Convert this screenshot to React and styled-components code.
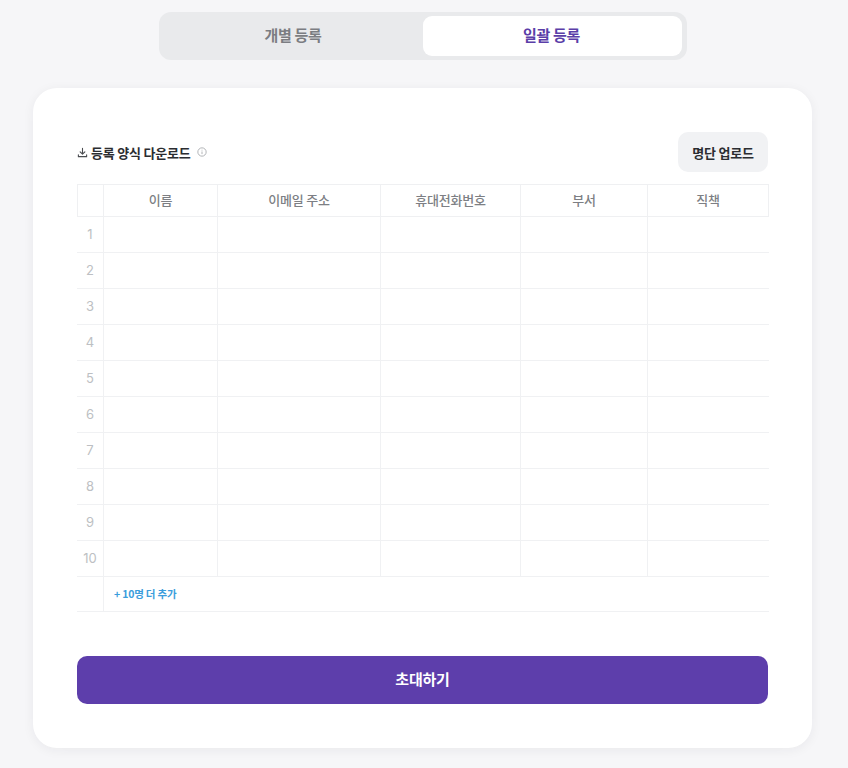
import React from 'react'
import styled, { createGlobalStyle } from 'styled-components'

const GlobalStyle = createGlobalStyle`
  html, body {
    margin: 0;
    padding: 0;
    background: #f6f6f8;
    font-family: 'Noto Sans CJK KR', 'Noto Sans', sans-serif;
  }
`

const Page = styled.div`
  box-sizing: border-box;
  width: 848px;
  height: 768px;
  padding: 12px 2px 0 0;
  display: flex;
  flex-direction: column;
  align-items: center;
  overflow: hidden;
`

const Tabs = styled.div`
  box-sizing: border-box;
  width: 528px;
  height: 48px;
  padding: 4px 5px 4px 4px;
  display: grid;
  grid-template-columns: 260px 259px;
  background: #e9eaec;
  border-radius: 12px;
`

const Tab = styled.div`
  display: flex;
  align-items: center;
  justify-content: center;
  padding-bottom: 3px;
  padding-right: ${({ active }) => (active ? '2px' : '0')};
  border-radius: 9px;
  font-size: 15px;
  font-weight: 700;
  letter-spacing: -0.3px;
  background: ${({ active }) => (active ? '#ffffff' : 'transparent')};
  color: ${({ active }) => (active ? '#5b3ea8' : '#7b7d82')};
`

const Card = styled.div`
  box-sizing: border-box;
  width: 779px;
  height: 660px;
  margin-top: 28px;
  margin-left: -1px;
  padding: 44px;
  background: #ffffff;
  border-radius: 24px;
  box-shadow: 0 2px 12px rgba(30, 35, 50, 0.06);
`

const TopRow = styled.div`
  display: flex;
  align-items: center;
  justify-content: space-between;
  width: 691px;
  height: 40px;
  margin-bottom: 12px;
`

const DownloadLink = styled.div`
  display: flex;
  align-items: center;
  font-size: 13px;
  font-weight: 700;
  letter-spacing: -0.2px;
  color: #2b2d31;
`

const DownloadIcon = styled.svg`
  width: 11px;
  height: 11px;
  margin-right: 3px;
  color: #4a4c50;
`

const InfoIcon = styled.svg`
  width: 10px;
  height: 10px;
  margin-left: 6px;
  color: #a4a6aa;
`

const UploadButton = styled.button`
  width: 90px;
  height: 40px;
  padding: 0;
  border: none;
  border-radius: 10px;
  background: #f1f2f4;
  color: #2b2d31;
  font-family: inherit;
  font-size: 13px;
  font-weight: 700;
  letter-spacing: -0.2px;
`

const Grid = styled.div`
  display: grid;
  grid-template-columns: 26px 114px 163px 140px 127px 122px;
  grid-template-rows: 33px repeat(10, 36px) 35px;
  width: 692px;
`

const HeadCell = styled.div`
  box-sizing: border-box;
  display: flex;
  align-items: center;
  justify-content: center;
  padding-bottom: 2px;
  border-top: 1px solid #eff0f2;
  border-bottom: 1px solid #eff0f2;
  border-left: 1px solid #eff0f2;
  border-right: ${({ last }) => (last ? '1px solid #eff0f2' : 'none')};
  font-size: 13px;
  font-weight: 500;
  letter-spacing: -0.2px;
  color: #7d7f84;
`

const IndexCell = styled.div`
  box-sizing: border-box;
  display: flex;
  align-items: center;
  justify-content: center;
  padding-bottom: 2px;
  border-bottom: 1px solid #f0f1f3;
  font-family: 'Inter', sans-serif;
  font-size: 13px;
  color: #bdbfc3;
`

const Cell = styled.div`
  box-sizing: border-box;
  border-bottom: 1px solid #f0f1f3;
  border-left: 1px solid #f0f1f3;
`

const AddCell = styled.div`
  box-sizing: border-box;
  grid-column: 2 / -1;
  display: flex;
  align-items: center;
  padding: 0 0 2px 10px;
  border-bottom: 1px solid #f0f1f3;
  border-left: 1px solid #f0f1f3;
  font-size: 10.5px;
  font-weight: 700;
  letter-spacing: -0.2px;
  color: #3b9ddc;
`

const InviteButton = styled.button`
  display: block;
  width: 691px;
  height: 48px;
  margin-top: 44px;
  padding: 0 0 3px;
  border: none;
  border-radius: 10px;
  background: #5d3eab;
  color: #ffffff;
  font-family: inherit;
  font-size: 15px;
  font-weight: 700;
  letter-spacing: -0.2px;
`

const COLUMNS = ['이름', '이메일 주소', '휴대전화번호', '부서', '직책']
const ROWS = [1, 2, 3, 4, 5, 6, 7, 8, 9, 10]

export default function App() {
  return (
    <Page>
      <GlobalStyle />
      <Tabs>
        <Tab>개별 등록</Tab>
        <Tab active>일괄 등록</Tab>
      </Tabs>
      <Card>
        <TopRow>
          <DownloadLink>
            <DownloadIcon viewBox="0 0 12 12" fill="none" stroke="currentColor" strokeWidth="1.2" strokeLinecap="round" strokeLinejoin="round">
              <path d="M6 1.5v6.2M3.4 5.2 6 7.8l2.6-2.6M1.5 8.5v2h9v-2" />
            </DownloadIcon>
            등록 양식 다운로드
            <InfoIcon viewBox="0 0 12 12" fill="none" stroke="currentColor" strokeWidth="1">
              <circle cx="6" cy="6" r="5" />
              <path d="M6 5.4v3.1M6 3.3v.9" />
            </InfoIcon>
          </DownloadLink>
          <UploadButton>명단 업로드</UploadButton>
        </TopRow>
        <Grid>
          <HeadCell />
          {COLUMNS.map((name, i) => (
            <HeadCell key={name} last={i === COLUMNS.length - 1}>{name}</HeadCell>
          ))}
          {ROWS.map(row => (
            <React.Fragment key={row}>
              <IndexCell>{row}</IndexCell>
              {COLUMNS.map(name => (
                <Cell key={name} />
              ))}
            </React.Fragment>
          ))}
          <IndexCell />
          <AddCell>+ 10명 더 추가</AddCell>
        </Grid>
        <InviteButton>초대하기</InviteButton>
      </Card>
    </Page>
  )
}
